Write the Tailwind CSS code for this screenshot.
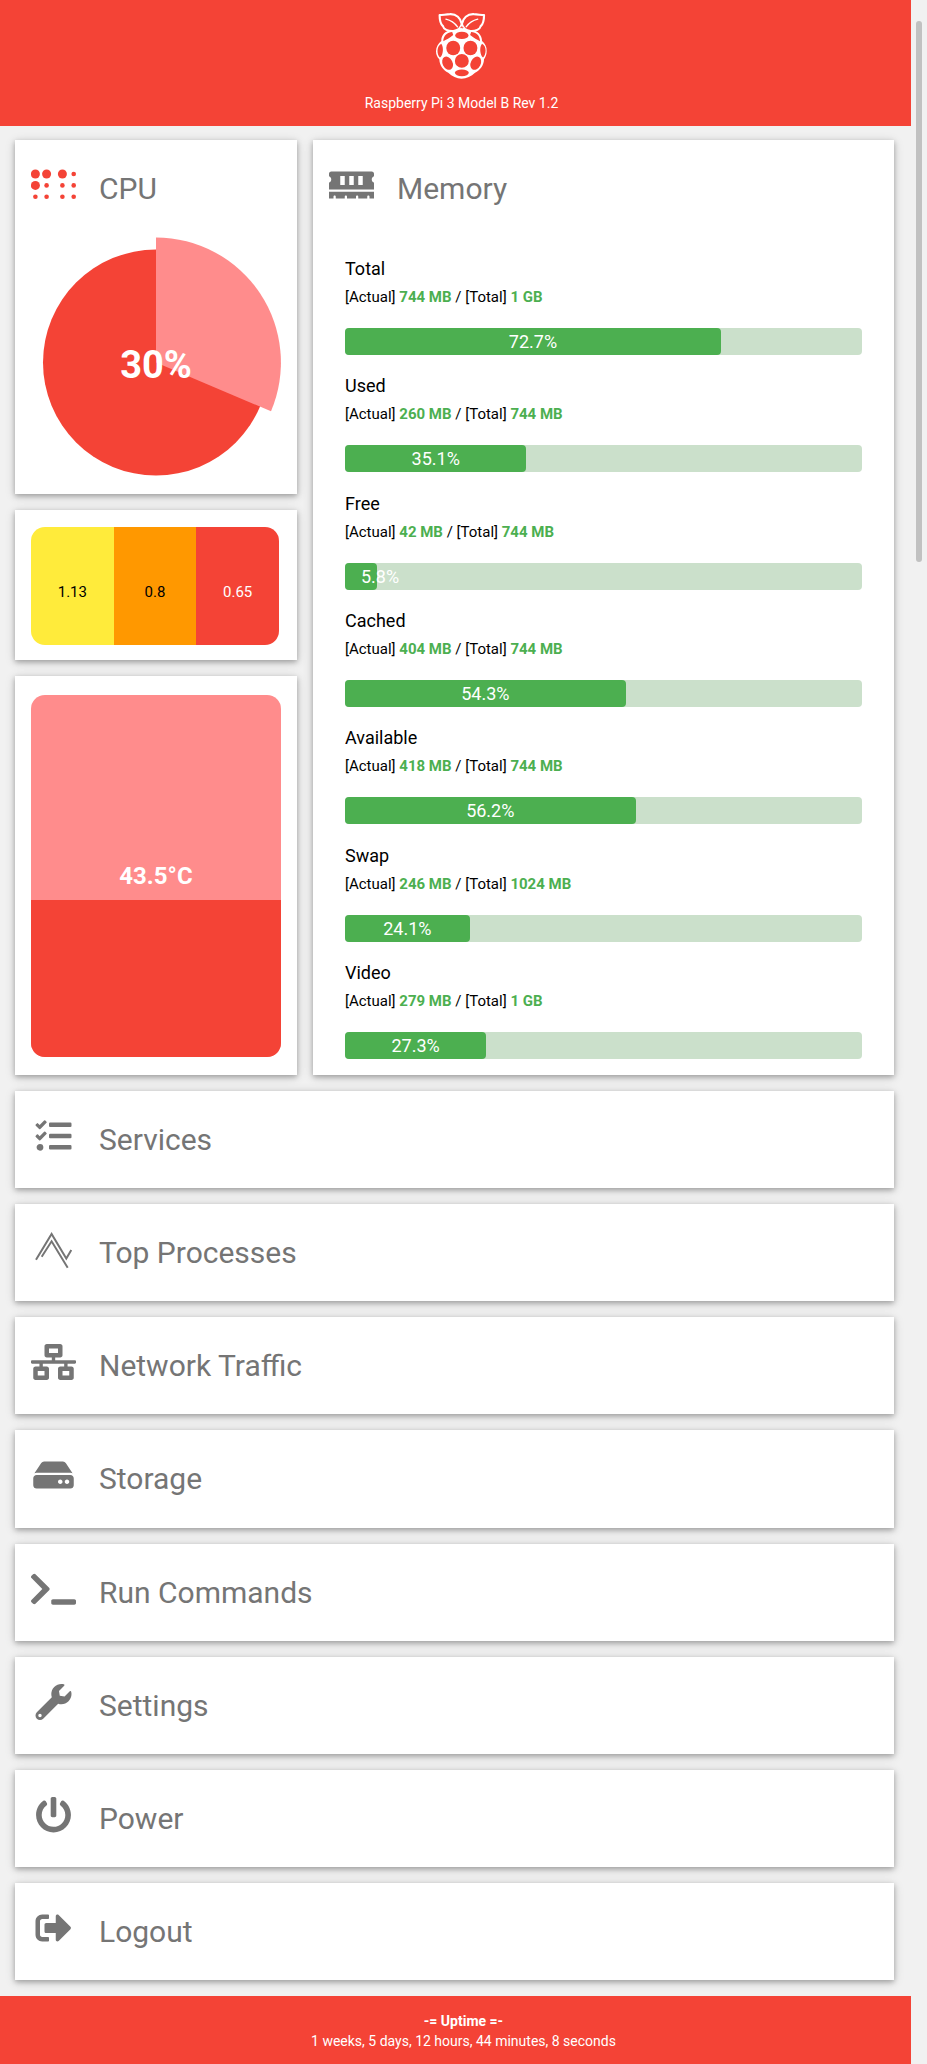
<!DOCTYPE html>
<html lang="en">
<head>
<meta charset="utf-8">
<meta name="viewport" content="width=device-width, initial-scale=1">
<title>Raspberry Pi Dashboard</title>
<script src="https://cdn.jsdelivr.net/npm/@tailwindcss/browser@4"></script>
</head>
<body class="relative flex min-h-screen flex-col bg-[#f1f1f1] pr-4 font-[Roboto,sans-serif] text-black">

<header class="flex flex-col items-center bg-[#f44336] pt-3 pb-[13px] pl-3 text-white">
  <svg class="h-[68px] w-[53px]" viewBox="286 36 160 204" fill="none" aria-hidden="true">
    <g stroke="#fff" stroke-width="6.5" stroke-linejoin="round" stroke-linecap="round">
      <path d="M367 72C364 54 350 41 331 42C320 42 309 45 300 45C300 58 301 70 310 78C312 87 325 94 341 93C353 92 363 86 367 72Z"/>
      <path d="M367 72C370 54 384 41 403 42C414 42 425 45 434 45C434 58 433 70 424 78C422 87 409 94 393 93C381 92 371 86 367 72Z"/>
      <path stroke-width="4" d="M319 57C332 60 345 68 354 80M415 57C402 60 389 68 380 80"/>
    </g>
    <path fill="#fff" d="M366 84C376 86 384 92 391 91C412 89 428 104 428 123C437 130 443 141 442 154C442 164 438 173 434 178C433 198 422 211 407 219C395 230 382 237 366 237C351 237 338 230 326 219C311 211 300 198 299 178C293 173 289 164 289 154C289 141 296 130 305 123C304 104 320 89 342 91C350 92 357 86 366 84Z"/>
    <g fill="#f44336">
      <ellipse cx="367" cy="106" rx="20" ry="11"/>
      <path d="M338 96C324 96 311 107 311 124C319 120 331 113 341 105ZM395 96C410 96 422 107 422 124C414 120 403 113 392 105Z"/>
      <ellipse cx="341" cy="144" rx="21" ry="22"/>
      <ellipse cx="393" cy="144" rx="21" ry="22"/>
      <path d="M305 131C290 138 291 164 301 173C311 166 313 141 305 131ZM428 131C443 138 441 164 431 173C422 166 419 141 428 131Z"/>
      <circle cx="367" cy="183" r="21"/>
      <ellipse cx="324" cy="190" rx="15" ry="21" transform="rotate(-27 324 190)"/>
      <ellipse cx="409" cy="190" rx="15" ry="21" transform="rotate(27 409 190)"/>
      <ellipse cx="367" cy="219" rx="21" ry="10"/>
      <path d="M361 83L367 78L373 83Z"/>
    </g>
  </svg>
  <p class="mt-[13px] text-sm">Raspberry Pi 3 Model B Rev 1.2</p>
</header>

<main class="flex grow flex-col gap-4 px-[15px] pt-[14px] pb-4 pr-[17px] text-[#757575]">
  <div class="flex gap-4">
    <div class="flex w-[282px] shrink-0 flex-col gap-4">
      <section class="bg-white px-4 pt-[27px] pb-[18px] shadow-[0_2px_5px_0_rgb(0_0_0/0.26),0_2px_10px_0_rgb(0_0_0/0.16)]">
        <div class="flex gap-[23px]">
          <svg class="h-9 w-[45px]" viewBox="0 0 45 36" fill="#f44336" aria-hidden="true">
            <g><circle cx="4.4" cy="7" r="4.5"/><circle cx="15.6" cy="7" r="4.5"/><circle cx="31.4" cy="7" r="4.5"/><circle cx="4.4" cy="18.4" r="4.5"/></g>
            <g><circle cx="42.7" cy="7" r="2.3"/><circle cx="15.6" cy="18.4" r="2.3"/><circle cx="31.4" cy="18.4" r="2.3"/><circle cx="42.7" cy="18.4" r="2.3"/><circle cx="4.4" cy="29.7" r="2.3"/><circle cx="15.6" cy="29.7" r="2.3"/><circle cx="31.4" cy="29.7" r="2.3"/><circle cx="42.7" cy="29.7" r="2.3"/></g>
          </svg>
          <h2 class="text-[30px] leading-[43px]">CPU</h2>
        </div>
        <svg class="mt-[27px] block w-full" viewBox="0 0 250 239" role="img" aria-label="CPU usage 30%">
          <circle cx="125" cy="125.5" r="113" fill="#f44336"/>
          <path d="M125 125.5V0.5A125 125 0 0 1 240 174.3Z" fill="#ff8c8c"/>
          <text x="125" y="141" text-anchor="middle" class="fill-white text-[38px] font-bold">30%</text>
        </svg>
      </section>

      <section class="bg-white pt-[17px] pr-[18px] pb-[15px] pl-4 shadow-[0_2px_5px_0_rgb(0_0_0/0.26),0_2px_10px_0_rgb(0_0_0/0.16)]">
        <ul class="grid h-[118px] grid-cols-3 overflow-hidden rounded-[14px] text-center text-[15px] text-black">
          <li class="flex items-center justify-center bg-[#ffeb3b] pt-3">1.13</li>
          <li class="flex items-center justify-center bg-[#ff9800] pt-3">0.8</li>
          <li class="flex items-center justify-center bg-[#f44336] pt-3 text-white">0.65</li>
        </ul>
      </section>

      <section class="bg-white px-4 pt-[19px] pb-[18px] shadow-[0_2px_5px_0_rgb(0_0_0/0.26),0_2px_10px_0_rgb(0_0_0/0.16)]">
        <div class="relative flex h-[362px] items-center justify-center overflow-hidden rounded-[14px] bg-[#ff8c8c]">
          <div class="absolute inset-x-0 bottom-0 bg-[#f44336]" style="height:43.5%"></div>
          <strong class="relative text-2xl font-bold text-white">43.5°C</strong>
        </div>
      </section>
    </div>

    <section class="flex min-w-0 grow flex-col bg-white px-4 pt-[27px] pb-4 shadow-[0_2px_5px_0_rgb(0_0_0/0.26),0_2px_10px_0_rgb(0_0_0/0.16)]">
      <div class="flex gap-[23px]">
        <svg class="h-9 w-[45px]" viewBox="0 0 640 512" fill="currentColor" aria-hidden="true"><path d="M640 130.94V96c0-17.67-14.33-32-32-32H32c-17.67 0-32 14.33-32 32v34.94c18.6 6.61 32 24.19 32 45.06s-13.4 38.45-32 45.06V320h640v-98.94c-18.6-6.61-32-24.19-32-45.06s13.4-38.45 32-45.06zM224 256h-64V128h64v128zm128 0h-64V128h64v128zm128 0h-64V128h64v128zM0 448h64v-26.67c0-8.84 7.16-16 16-16s16 7.16 16 16V448h128v-26.67c0-8.84 7.16-16 16-16s16 7.16 16 16V448h128v-26.67c0-8.84 7.16-16 16-16s16 7.16 16 16V448h128v-26.67c0-8.84 7.16-16 16-16s16 7.16 16 16V448h64v-96H0v96z"/></svg>
        <h2 class="text-[30px] leading-[43px]">Memory</h2>
      </div>
      <div class="mt-11 flex grow flex-col justify-between px-4 text-black">
        <div>
          <h3 class="text-lg leading-[30px]">Total</h3>
          <p class="text-[15px] leading-[26px]">[Actual] <b class="text-[#4caf50]">744 MB</b> / [Total] <b class="text-[#4caf50]">1 GB</b></p>
          <div class="mt-[18px] rounded bg-[#cbe0cb]" role="progressbar" aria-label="Total" aria-valuenow="72.7"><div class="rounded bg-[#4caf50] px-4 text-center text-lg leading-[27px] text-white" style="width:72.7%">72.7%</div></div>
        </div>
        <div>
          <h3 class="text-lg leading-[30px]">Used</h3>
          <p class="text-[15px] leading-[26px]">[Actual] <b class="text-[#4caf50]">260 MB</b> / [Total] <b class="text-[#4caf50]">744 MB</b></p>
          <div class="mt-[18px] rounded bg-[#cbe0cb]" role="progressbar" aria-label="Used" aria-valuenow="35.1"><div class="rounded bg-[#4caf50] px-4 text-center text-lg leading-[27px] text-white" style="width:35.1%">35.1%</div></div>
        </div>
        <div>
          <h3 class="text-lg leading-[30px]">Free</h3>
          <p class="text-[15px] leading-[26px]">[Actual] <b class="text-[#4caf50]">42 MB</b> / [Total] <b class="text-[#4caf50]">744 MB</b></p>
          <div class="mt-[18px] rounded bg-[#cbe0cb]" role="progressbar" aria-label="Free" aria-valuenow="5.8"><div class="rounded bg-[#4caf50] px-4 text-center text-lg leading-[27px] text-white" style="width:5.8%">5.8%</div></div>
        </div>
        <div>
          <h3 class="text-lg leading-[30px]">Cached</h3>
          <p class="text-[15px] leading-[26px]">[Actual] <b class="text-[#4caf50]">404 MB</b> / [Total] <b class="text-[#4caf50]">744 MB</b></p>
          <div class="mt-[18px] rounded bg-[#cbe0cb]" role="progressbar" aria-label="Cached" aria-valuenow="54.3"><div class="rounded bg-[#4caf50] px-4 text-center text-lg leading-[27px] text-white" style="width:54.3%">54.3%</div></div>
        </div>
        <div>
          <h3 class="text-lg leading-[30px]">Available</h3>
          <p class="text-[15px] leading-[26px]">[Actual] <b class="text-[#4caf50]">418 MB</b> / [Total] <b class="text-[#4caf50]">744 MB</b></p>
          <div class="mt-[18px] rounded bg-[#cbe0cb]" role="progressbar" aria-label="Available" aria-valuenow="56.2"><div class="rounded bg-[#4caf50] px-4 text-center text-lg leading-[27px] text-white" style="width:56.2%">56.2%</div></div>
        </div>
        <div>
          <h3 class="text-lg leading-[30px]">Swap</h3>
          <p class="text-[15px] leading-[26px]">[Actual] <b class="text-[#4caf50]">246 MB</b> / [Total] <b class="text-[#4caf50]">1024 MB</b></p>
          <div class="mt-[18px] rounded bg-[#cbe0cb]" role="progressbar" aria-label="Swap" aria-valuenow="24.1"><div class="rounded bg-[#4caf50] px-4 text-center text-lg leading-[27px] text-white" style="width:24.1%">24.1%</div></div>
        </div>
        <div>
          <h3 class="text-lg leading-[30px]">Video</h3>
          <p class="text-[15px] leading-[26px]">[Actual] <b class="text-[#4caf50]">279 MB</b> / [Total] <b class="text-[#4caf50]">1 GB</b></p>
          <div class="mt-[18px] rounded bg-[#cbe0cb]" role="progressbar" aria-label="Video" aria-valuenow="27.3"><div class="rounded bg-[#4caf50] px-4 text-center text-lg leading-[27px] text-white" style="width:27.3%">27.3%</div></div>
        </div>
      </div>
    </section>
  </div>

  <nav class="flex grow flex-col gap-4">
    <button type="button" class="flex flex-1 items-start gap-[23px] bg-white px-4 pt-[27px] pb-[27px] text-left shadow-[0_2px_5px_0_rgb(0_0_0/0.26),0_2px_10px_0_rgb(0_0_0/0.16)]">
      <svg class="h-9 w-[45px]" viewBox="0 0 512 512" fill="currentColor" aria-hidden="true"><path d="M139.61 35.5a12 12 0 0 0-17 0L58.93 98.81l-22.7-22.12a12 12 0 0 0-17 0L3.53 92.41a12 12 0 0 0 0 17l47.59 47.4a12.78 12.78 0 0 0 17.61 0l15.59-15.62L156.52 69a12.09 12.09 0 0 0 .09-17zm0 159.19a12 12 0 0 0-17 0l-63.68 63.72-22.7-22.1a12 12 0 0 0-17 0L3.53 252a12 12 0 0 0 0 17L51 316.5a12.77 12.77 0 0 0 17.6 0l15.7-15.69 72.2-72.22a12 12 0 0 0 .09-16.9zM64 368c-26.49 0-48.59 21.5-48.59 48S37.53 464 64 464a48 48 0 0 0 0-96zm432 16H208a16 16 0 0 0-16 16v32a16 16 0 0 0 16 16h288a16 16 0 0 0 16-16v-32a16 16 0 0 0-16-16zm0-320H208a16 16 0 0 0-16 16v32a16 16 0 0 0 16 16h288a16 16 0 0 0 16-16V80a16 16 0 0 0-16-16zm0 160H208a16 16 0 0 0-16 16v32a16 16 0 0 0 16 16h288a16 16 0 0 0 16-16v-32a16 16 0 0 0-16-16z"/></svg>
      <span class="text-[30px] leading-[43px]">Services</span>
    </button>
    <button type="button" class="flex flex-1 items-start gap-[23px] bg-white px-4 pt-[27px] pb-[27px] text-left shadow-[0_2px_5px_0_rgb(0_0_0/0.26),0_2px_10px_0_rgb(0_0_0/0.16)]">
      <svg class="h-9 w-[45px] overflow-visible" viewBox="0 0 36 36" fill="none" stroke="currentColor" stroke-width="2" aria-hidden="true"><path d="M.5 28.7L16.1 3L30.8 27.5L35.8 19M6.2 25.7L16.1 10.3L32.2 36.7"/></svg>
      <span class="text-[30px] leading-[43px]">Top Processes</span>
    </button>
    <button type="button" class="flex flex-1 items-start gap-[23px] bg-white px-4 pt-[27px] pb-[27px] text-left shadow-[0_2px_5px_0_rgb(0_0_0/0.26),0_2px_10px_0_rgb(0_0_0/0.16)]">
      <svg class="h-9 w-[45px]" viewBox="0 0 640 512" fill="currentColor" aria-hidden="true"><path d="M640 264v-16c0-8.84-7.16-16-16-16H344v-40h72c17.67 0 32-14.33 32-32V32c0-17.67-14.33-32-32-32H224c-17.67 0-32 14.33-32 32v128c0 17.67 14.33 32 32 32h72v40H16c-8.84 0-16 7.16-16 16v16c0 8.84 7.16 16 16 16h104v40H64c-17.67 0-32 14.33-32 32v128c0 17.67 14.33 32 32 32h160c17.67 0 32-14.33 32-32V352c0-17.67-14.33-32-32-32h-56v-40h304v40h-56c-17.67 0-32 14.33-32 32v128c0 17.67 14.33 32 32 32h160c17.67 0 32-14.33 32-32V352c0-17.67-14.33-32-32-32h-56v-40h104c8.84 0 16-7.16 16-16zM256 128V64h128v64H256zm-64 320H96v-64h96v64zm352 0h-96v-64h96v64z"/></svg>
      <span class="text-[30px] leading-[43px]">Network Traffic</span>
    </button>
    <button type="button" class="flex flex-1 items-start gap-[23px] bg-white px-4 pt-[27px] pb-[27px] text-left shadow-[0_2px_5px_0_rgb(0_0_0/0.26),0_2px_10px_0_rgb(0_0_0/0.16)]">
      <svg class="h-9 w-[45px]" viewBox="0 0 576 512" fill="currentColor" aria-hidden="true"><path d="M576 304v96c0 26.51-21.49 48-48 48H48c-26.51 0-48-21.49-48-48v-96c0-26.51 21.49-48 48-48h480c26.51 0 48 21.49 48 48zm-48-80a79.557 79.557 0 0 1 30.777 6.165L462.25 85.374A48.003 48.003 0 0 0 422.311 64H153.689a48 48 0 0 0-39.938 21.374L17.223 230.165A79.557 79.557 0 0 1 48 224h480zm-48 96c-17.673 0-32 14.327-32 32s14.327 32 32 32 32-14.327 32-32-14.327-32-32-32zm-96 0c-17.673 0-32 14.327-32 32s14.327 32 32 32 32-14.327 32-32-14.327-32-32-32z"/></svg>
      <span class="text-[30px] leading-[43px]">Storage</span>
    </button>
    <button type="button" class="flex flex-1 items-start gap-[23px] bg-white px-4 pt-[27px] pb-[27px] text-left shadow-[0_2px_5px_0_rgb(0_0_0/0.26),0_2px_10px_0_rgb(0_0_0/0.16)]">
      <svg class="h-9 w-[45px]" viewBox="0 0 640 512" fill="currentColor" aria-hidden="true"><path d="M257.981 272.971L63.638 467.314c-9.373 9.373-24.569 9.373-33.941 0L7.029 444.647c-9.357-9.357-9.375-24.522-.04-33.901L161.011 256 6.99 101.255c-9.335-9.379-9.317-24.544.04-33.901l22.667-22.667c9.373-9.373 24.569-9.373 33.941 0L257.981 239.03c9.373 9.372 9.373 24.568 0 33.941zM640 456v-32c0-13.255-10.745-24-24-24H312c-13.255 0-24 10.745-24 24v32c0 13.255 10.745 24 24 24h304c13.255 0 24-10.745 24-24z"/></svg>
      <span class="text-[30px] leading-[43px]">Run Commands</span>
    </button>
    <button type="button" class="flex flex-1 items-start gap-[23px] bg-white px-4 pt-[27px] pb-[27px] text-left shadow-[0_2px_5px_0_rgb(0_0_0/0.26),0_2px_10px_0_rgb(0_0_0/0.16)]">
      <svg class="h-9 w-[45px]" viewBox="0 0 512 512" fill="currentColor" aria-hidden="true"><path d="M507.73 109.1c-2.24-9.03-13.54-12.09-20.12-5.51l-74.36 74.36-67.88-11.31-11.31-67.88 74.36-74.36c6.62-6.62 3.43-17.9-5.66-20.16-47.38-11.74-99.55.91-136.58 37.93-39.64 39.64-50.55 97.1-34.05 147.2L18.74 402.76c-24.99 24.99-24.99 65.51 0 90.5 24.99 24.99 65.51 24.99 90.5 0l213.21-213.21c50.12 16.71 107.47 5.68 147.37-34.22 37.07-37.07 49.7-89.32 37.91-136.73zM64 472c-13.25 0-24-10.75-24-24 0-13.26 10.75-24 24-24s24 10.74 24 24c0 13.25-10.75 24-24 24z"/></svg>
      <span class="text-[30px] leading-[43px]">Settings</span>
    </button>
    <button type="button" class="flex flex-1 items-start gap-[23px] bg-white px-4 pt-[27px] pb-[27px] text-left shadow-[0_2px_5px_0_rgb(0_0_0/0.26),0_2px_10px_0_rgb(0_0_0/0.16)]">
      <svg class="h-9 w-[45px]" viewBox="0 0 512 512" fill="currentColor" aria-hidden="true"><path d="M400 54.1c63 45 104 118.6 104 201.9 0 136.8-110.8 247.7-247.5 248C120 504.3 8.2 393 8 256.4 7.9 173.1 48.9 99.3 111.8 54.2c11.7-8.3 28-4.8 35 7.7L162.6 90c5.9 10.5 3.1 23.8-6.6 31-41.5 30.8-68 79.6-68 134.9-.1 92.3 74.5 168.1 168 168.1 91.6 0 168.6-74.2 168-169.1-.3-51.8-24.7-101.8-68.1-134-9.7-7.2-12.4-20.5-6.5-30.9l15.8-28.1c7-12.4 23.2-16.1 34.8-7.8zM296 264V24c0-13.3-10.7-24-24-24h-32c-13.3 0-24 10.7-24 24v240c0 13.3 10.7 24 24 24h32c13.3 0 24-10.7 24-24z"/></svg>
      <span class="text-[30px] leading-[43px]">Power</span>
    </button>
    <button type="button" class="flex flex-1 items-start gap-[23px] bg-white px-4 pt-[27px] pb-[27px] text-left shadow-[0_2px_5px_0_rgb(0_0_0/0.26),0_2px_10px_0_rgb(0_0_0/0.16)]">
      <svg class="h-9 w-[45px]" viewBox="0 0 512 512" fill="currentColor" aria-hidden="true"><path d="M497 273L329 441c-15 15-41 4.5-41-17v-96H152c-13.3 0-24-10.7-24-24v-96c0-13.3 10.7-24 24-24h136V88c0-21.4 25.9-32 41-17l168 168c9.3 9.4 9.3 24.6 0 34zM192 436v-40c0-6.6-5.4-12-12-12H96c-17.7 0-32-14.3-32-32V160c0-17.7 14.3-32 32-32h84c6.6 0 12-5.4 12-12V76c0-6.6-5.4-12-12-12H96c-53 0-96 43-96 96v192c0 53 43 96 96 96h84c6.6 0 12-5.4 12-12z"/></svg>
      <span class="text-[30px] leading-[43px]">Logout</span>
    </button>
  </nav>
</main>

<footer class="bg-[#f44336] pt-[15px] pb-[13px] pl-4 text-center text-sm text-white">
  <p class="font-bold">-= Uptime =-</p>
  <p>1 weeks, 5 days, 12 hours, 44 minutes, 8 seconds</p>
</footer>

<!-- Scroll thumb floating in the right gutter -->
<div class="absolute top-[21px] right-[5px] h-[541px] w-[6px] rounded-full bg-[#c1c1c1]"></div>
</body>
</html>
